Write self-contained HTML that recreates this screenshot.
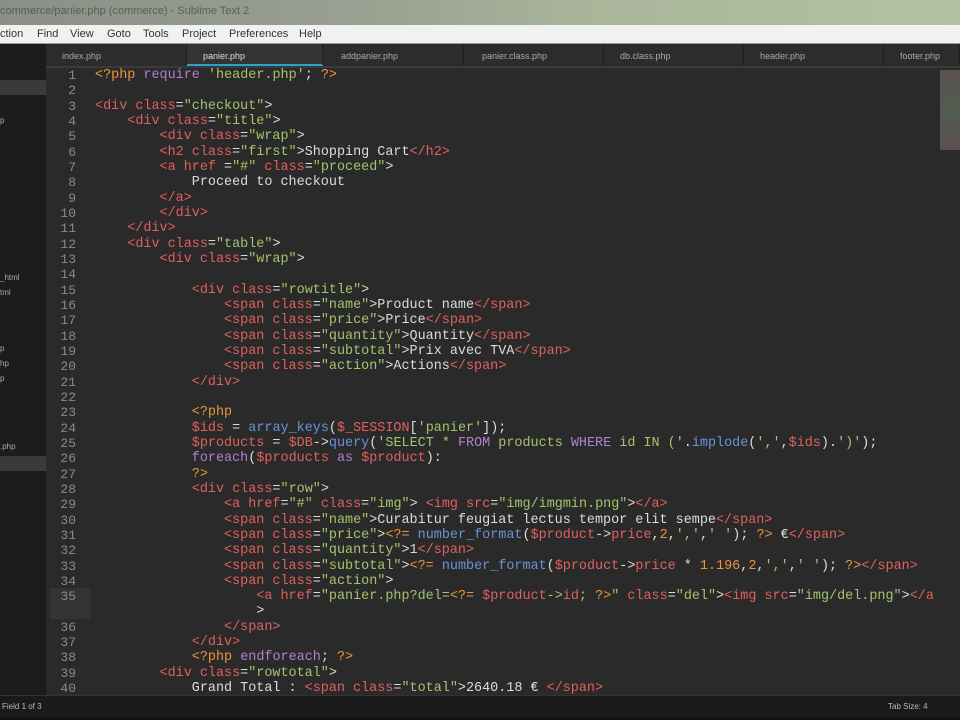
<!DOCTYPE html>
<html><head><meta charset="utf-8"><style>
*{margin:0;padding:0;box-sizing:border-box}
body{width:960px;height:720px;overflow:hidden;background:#111;position:relative;font-family:"Liberation Sans",sans-serif}
#title{position:absolute;left:0;top:0;width:960px;height:25px;background:linear-gradient(90deg,#8a8f88 0%,#9aa292 40%,#a9b49a 60%,#b4c2a2 100%)}
#title span{position:absolute;left:0;top:5px;font-size:11px;color:#3d4a3d;opacity:.7}
#menu{position:absolute;left:0;top:25px;width:960px;height:19px;background:#f1f1ef;border-bottom:1px solid #999;font-size:11px;color:#333}
#menu span{position:absolute;top:3px}
#side{position:absolute;left:0;top:44px;width:46px;height:651px;background:#1c1c1c}
.sh{position:absolute;left:0;width:46px;height:15px;background:#3a3a3a}
.sf{position:absolute;left:0;font-size:8px;color:#aaa}
#tabs{position:absolute;left:46px;top:44px;width:914px;height:24px;background:#2c2c2c;border-bottom:2px solid #3a3a3a}
.tab{position:absolute;top:0;height:22px;font-size:9px;color:#aaa;padding-top:7px;border-right:1px solid #1e1e1e}
.tab.act{background:#333;color:#ddd;border-bottom:2px solid #2aa3c6}
#ed{position:absolute;left:46px;top:68px;width:914px;height:627px;background:#2a2a2a}
#cur{position:absolute;left:50px;top:588px;width:40px;height:31px;background:#333}
pre{position:absolute;font-family:"Liberation Mono",monospace;font-size:13.45px;line-height:15.33px;top:68px}
#nums{left:46px;width:30px;text-align:right;color:#8a8a8a;font-size:13px}
#code{left:95px;color:#dcdcdc}
.t{color:#e0605c}.s{color:#a4c46c}.p{color:#e8963c}.v{color:#e06060}.f{color:#6a92d8}.k{color:#b080d0}
#mini{position:absolute;left:940px;top:70px;width:20px;height:80px;background:linear-gradient(180deg,#6a5a5a,#5a6a5a 50%,#6a5858);opacity:.8}
#status{position:absolute;left:0;top:695px;width:960px;height:22px;background:#1a1a1a;border-top:1px solid #333;font-size:8px;color:#bbb}
</style></head><body>
<div id="title"><span>commerce/panier.php (commerce) - Sublime Text 2</span></div>
<div id="menu"><span style="left:0">ction</span><span style="left:37px">Find</span><span style="left:70px">View</span><span style="left:107px">Goto</span><span style="left:143px">Tools</span><span style="left:182px">Project</span><span style="left:229px">Preferences</span><span style="left:299px">Help</span></div>
<div id="side">
<div class="sh" style="top:36px"></div>
<div class="sh" style="top:412px"></div>
<span class="sf" style="top:72px">p</span>
<span class="sf" style="top:229px">_html</span>
<span class="sf" style="top:244px">tml</span>
<span class="sf" style="top:300px">p</span>
<span class="sf" style="top:315px">hp</span>
<span class="sf" style="top:330px">p</span>
<span class="sf" style="top:398px">.php</span>
</div>
<div id="tabs">
<div class="tab" style="left:0;width:141px;padding-left:16px">index.php</div>
<div class="tab act" style="left:141px;width:136px;padding-left:16px">panier.php</div>
<div class="tab" style="left:277px;width:141px;padding-left:18px">addpanier.php</div>
<div class="tab" style="left:418px;width:140px;padding-left:18px">panier.class.php</div>
<div class="tab" style="left:558px;width:140px;padding-left:16px">db.class.php</div>
<div class="tab" style="left:698px;width:140px;padding-left:16px">header.php</div>
<div class="tab" style="left:838px;width:76px;padding-left:16px">footer.php</div>
</div>
<div id="ed"></div>
<div id="cur"></div>
<div id="mini"></div>
<pre id="nums">1
2
3
4
5
6
7
8
9
10
11
12
13
14
15
16
17
18
19
20
21
22
23
24
25
26
27
28
29
30
31
32
33
34
35

36
37
38
39
40</pre>
<pre id="code"><span class="p">&lt;?php</span> <span class="k">require</span> <span class="s">'header.php'</span>; <span class="p">?&gt;</span>

<span class="t">&lt;div class</span>=<span class="s">"checkout"</span>&gt;
    <span class="t">&lt;div class</span>=<span class="s">"title"</span>&gt;
        <span class="t">&lt;div class</span>=<span class="s">"wrap"</span>&gt;
        <span class="t">&lt;h2 class</span>=<span class="s">"first"</span>&gt;Shopping Cart<span class="t">&lt;/h2&gt;</span>
        <span class="t">&lt;a href</span> =<span class="s">"#"</span> <span class="t">class</span>=<span class="s">"proceed"</span>&gt;
            Proceed to checkout
        <span class="t">&lt;/a&gt;</span>
        <span class="t">&lt;/div&gt;</span>
    <span class="t">&lt;/div&gt;</span>
    <span class="t">&lt;div class</span>=<span class="s">"table"</span>&gt;
        <span class="t">&lt;div class</span>=<span class="s">"wrap"</span>&gt;

            <span class="t">&lt;div class</span>=<span class="s">"rowtitle"</span>&gt;
                <span class="t">&lt;span class</span>=<span class="s">"name"</span>&gt;Product name<span class="t">&lt;/span&gt;</span>
                <span class="t">&lt;span class</span>=<span class="s">"price"</span>&gt;Price<span class="t">&lt;/span&gt;</span>
                <span class="t">&lt;span class</span>=<span class="s">"quantity"</span>&gt;Quantity<span class="t">&lt;/span&gt;</span>
                <span class="t">&lt;span class</span>=<span class="s">"subtotal"</span>&gt;Prix avec TVA<span class="t">&lt;/span&gt;</span>
                <span class="t">&lt;span class</span>=<span class="s">"action"</span>&gt;Actions<span class="t">&lt;/span&gt;</span>
            <span class="t">&lt;/div&gt;</span>

            <span class="p">&lt;?php</span>
            <span class="v">$ids</span> = <span class="f">array_keys</span>(<span class="v">$_SESSION</span>[<span class="s">'panier'</span>]);
            <span class="v">$products</span> = <span class="v">$DB</span>-&gt;<span class="f">query</span>(<span class="s">'SELECT * </span><span class="k">FROM</span><span class="s"> products </span><span class="k">WHERE</span><span class="s"> id IN ('</span>.<span class="f">implode</span>(<span class="s">','</span>,<span class="v">$ids</span>).<span class="s">')'</span>);
            <span class="k">foreach</span>(<span class="v">$products</span> <span class="k">as</span> <span class="v">$product</span>):
            <span class="p">?&gt;</span>
            <span class="t">&lt;div class</span>=<span class="s">"row"</span>&gt;
                <span class="t">&lt;a href</span>=<span class="s">"#"</span> <span class="t">class</span>=<span class="s">"img"</span>&gt; <span class="t">&lt;img src</span>=<span class="s">"img/imgmin.png"</span>&gt;<span class="t">&lt;/a&gt;</span>
                <span class="t">&lt;span class</span>=<span class="s">"name"</span>&gt;Curabitur feugiat lectus tempor elit sempe<span class="t">&lt;/span&gt;</span>
                <span class="t">&lt;span class</span>=<span class="s">"price"</span>&gt;<span class="p">&lt;?=</span> <span class="f">number_format</span>(<span class="v">$product</span>-&gt;<span class="v">price</span>,<span class="p">2</span>,<span class="s">','</span>,<span class="s">' '</span>); <span class="p">?&gt;</span> €<span class="t">&lt;/span&gt;</span>
                <span class="t">&lt;span class</span>=<span class="s">"quantity"</span>&gt;1<span class="t">&lt;/span&gt;</span>
                <span class="t">&lt;span class</span>=<span class="s">"subtotal"</span>&gt;<span class="p">&lt;?=</span> <span class="f">number_format</span>(<span class="v">$product</span>-&gt;<span class="v">price</span> * <span class="p">1.196</span>,<span class="p">2</span>,<span class="s">','</span>,<span class="s">' '</span>); <span class="p">?&gt;</span><span class="t">&lt;/span&gt;</span>
                <span class="t">&lt;span class</span>=<span class="s">"action"</span>&gt;
                    <span class="t">&lt;a href</span>=<span class="s">"panier.php?del=<span class="p">&lt;?=</span> <span class="v">$product</span>-&gt;<span class="v">id</span>; <span class="p">?&gt;</span>"</span> <span class="t">class</span>=<span class="s">"del"</span>&gt;<span class="t">&lt;img src</span>=<span class="s">"img/del.png"</span>&gt;<span class="t">&lt;/a</span>
                    &gt;
                <span class="t">&lt;/span&gt;</span>
            <span class="t">&lt;/div&gt;</span>
            <span class="p">&lt;?php</span> <span class="k">endforeach</span>; <span class="p">?&gt;</span>
        <span class="t">&lt;div class</span>=<span class="s">"rowtotal"</span>&gt;
            Grand Total : <span class="t">&lt;span class</span>=<span class="s">"total"</span>&gt;2640.18 € <span class="t">&lt;/span&gt;</span></pre>
<div id="status"><span style="position:absolute;left:2px;top:6px">Field 1 of 3</span><span style="position:absolute;left:888px;top:6px">Tab Size: 4</span></div>
</body></html>
